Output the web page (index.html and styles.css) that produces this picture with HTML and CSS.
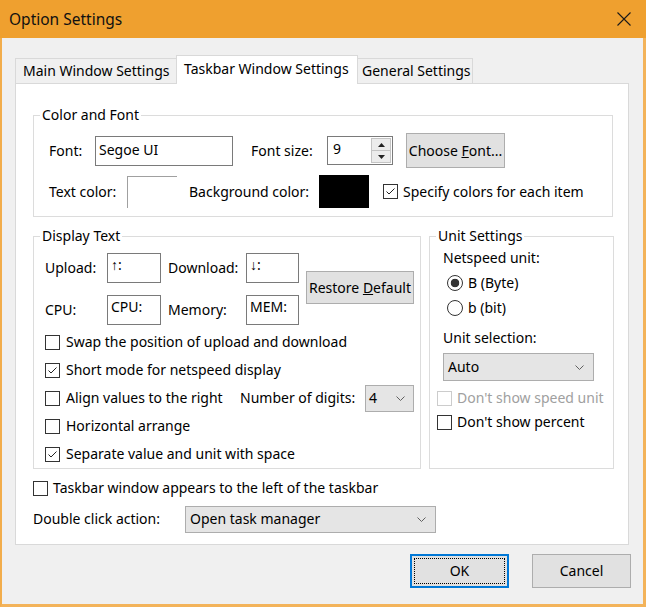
FILE: index.html
```html
<!DOCTYPE html>
<html>
<head>
<meta charset="utf-8">
<title>Option Settings</title>
<link rel="stylesheet" href="styles.css">
</head>
<body>
<div class="titlebar">
  <span class="title">Option Settings</span>
  <svg class="close" width="14" height="14" viewBox="0 0 14 14"><path d="M0.5 0.5 L13.5 13.5 M13.5 0.5 L0.5 13.5" stroke="#1a1a1a" stroke-width="1.1" fill="none"/></svg>
</div>
<div class="client">
  <div class="tabs">
    <div class="tab t-main">Main Window Settings</div>
    <div class="tab t-active">Taskbar Window Settings</div>
    <div class="tab t-gen">General Settings</div>
  </div>
  <div class="panel">
    <fieldset class="group g-color">
      <legend>Color and Font</legend>
      <div class="cf-body">
        <div class="cf-row r1">
          <span class="lbl w-font">Font:</span>
          <div class="edit font-edit">Segoe UI</div>
          <span class="lbl w-fs">Font size:</span>
          <div class="spin">
            <div class="spin-text">9</div>
            <div class="spin-btns">
              <div class="spin-btn"><svg width="7" height="4" viewBox="0 0 7 4"><path d="M0 4 L3.5 0 L7 4 Z" fill="#222"/></svg></div>
              <div class="spin-btn"><svg width="7" height="4" viewBox="0 0 7 4"><path d="M0 0 L3.5 4 L7 0 Z" fill="#222"/></svg></div>
            </div>
          </div>
          <div class="btn choose"><span>Choose <u>F</u>ont...</span></div>
        </div>
        <div class="cf-row r2">
          <span class="lbl w-tc">Text color:</span>
          <div class="swatch sw-white"></div>
          <span class="lbl w-bc">Background color:</span>
          <div class="swatch sw-black"></div>
          <label class="check c-spec"><span class="box"><svg width="13" height="13" viewBox="0 0 13 13"><polyline points="2.5,6.5 5,9 10.5,3.5" fill="none" stroke="#222" stroke-width="1"/></svg></span><span>Specify colors for each item</span></label>
        </div>
      </div>
    </fieldset>

    <div class="mid">
      <fieldset class="group g-display">
        <legend>Display Text</legend>
        <div class="dt-body">
          <div class="dt-grid">
            <span class="lbl">Upload:</span>
            <div class="edit small">↑:</div>
            <span class="lbl lbl2">Download:</span>
            <div class="edit small">↓:</div>
            <div class="btn restore"><span>Restore <u>D</u>efault</span></div>
            <span class="lbl">CPU:</span>
            <div class="edit small">CPU:</div>
            <span class="lbl lbl2">Memory:</span>
            <div class="edit small">MEM:</div>
          </div>
          <div class="checks">
            <label class="check row"><span class="box"></span><span>Swap the position of upload and download</span></label>
            <label class="check row"><span class="box"><svg width="13" height="13" viewBox="0 0 13 13"><polyline points="2.5,6.5 5,9 10.5,3.5" fill="none" stroke="#222" stroke-width="1"/></svg></span><span>Short mode for netspeed display</span></label>
            <div class="row digits-row">
              <label class="check c-align"><span class="box"></span><span>Align values to the right</span></label>
              <span class="lbl w-dig">Number of digits:</span>
              <div class="combo c-dig"><span>4</span><svg width="9" height="5" viewBox="0 0 9 5"><polyline points="0.5,0.5 4.5,4.5 8.5,0.5" fill="none" stroke="#606060" stroke-width="1"/></svg></div>
            </div>
            <label class="check row"><span class="box"></span><span>Horizontal arrange</span></label>
            <label class="check row"><span class="box"><svg width="13" height="13" viewBox="0 0 13 13"><polyline points="2.5,6.5 5,9 10.5,3.5" fill="none" stroke="#222" stroke-width="1"/></svg></span><span>Separate value and unit with space</span></label>
          </div>
        </div>
      </fieldset>

      <fieldset class="group g-unit">
        <legend>Unit Settings</legend>
        <div class="us-body">
          <div class="lbl-line">Netspeed unit:</div>
          <div class="radios">
            <label class="radio-row"><span class="radio on"></span><span>B (Byte)</span></label>
            <label class="radio-row"><span class="radio"></span><span>b (bit)</span></label>
          </div>
          <div class="lbl-line us-sel">Unit selection:</div>
          <div class="combo c-auto"><span>Auto</span><svg width="9" height="5" viewBox="0 0 9 5"><polyline points="0.5,0.5 4.5,4.5 8.5,0.5" fill="none" stroke="#606060" stroke-width="1"/></svg></div>
          <div class="us-checks">
            <label class="check urow disabled"><span class="box"></span><span>Don't show speed unit</span></label>
            <label class="check urow"><span class="box"></span><span>Don't show percent</span></label>
          </div>
        </div>
      </fieldset>
    </div>

    <label class="check c-left"><span class="box"></span><span>Taskbar window appears to the left of the taskbar</span></label>
    <div class="dbl-row">
      <span class="lbl w-dbl">Double click action:</span>
      <div class="combo c-dbl"><span>Open task manager</span><svg width="9" height="5" viewBox="0 0 9 5"><polyline points="0.5,0.5 4.5,4.5 8.5,0.5" fill="none" stroke="#606060" stroke-width="1"/></svg></div>
    </div>
  </div>
  <div class="buttons">
    <div class="btn dlg ok"><span class="focus">OK</span></div>
    <div class="btn dlg">Cancel</div>
  </div>
</div>
</body>
</html>
```

FILE: styles.css
```css
* { box-sizing: border-box; }
html, body { margin: 0; padding: 0; }
body {
  width: 646px;
  height: 607px;
  overflow: hidden;
  background: #f0f0f0;
  font-family: "Noto Sans", "Open Sans", sans-serif;
  font-size: 14px;
  line-height: 18px;
  color: #000;
}

/* title bar */
.titlebar {
  height: 38px;
  background: #efa02f;
  display: flex;
  align-items: center;
  justify-content: space-between;
  padding: 0 15px 0 9px;
}
.title { font-size: 15.5px; color: #111; }
.close { display: block; }

/* client area */
.client {
  height: 569px;
  border-left: 2px solid #f2ad4c;
  border-right: 3px solid #f3b35a;
  border-bottom: 3px solid #f3b35a;
  background: #f0f0f0;
  padding-top: 17px;
}

.tabs {
  display: flex;
  align-items: flex-end;
  height: 28px;
  margin-left: 13px;
}
.tab {
  height: 25px;
  background: #f0f0f0;
  border: 1px solid #d9d9d9;
  border-bottom: none;
  padding: 3px 0 0 7px;
  white-space: nowrap;
}
.t-main { width: 161px; border-right: none; }
.t-active {
  width: 182px;
  height: 29px;
  margin-bottom: -1px;
  background: #fff;
  position: relative;
  z-index: 1;
  padding-top: 4px;
}
.t-gen { width: 115px; border-left: none; padding-left: 4px; }

.panel {
  margin-left: 13px;
  width: 614px;
  height: 462px;
  background: #fff;
  border: 1px solid #d9d9d9;
  padding: 22px 0 0 17px;
}

/* group boxes */
.group {
  margin: 0;
  padding: 0;
  border: 1px solid #dcdcdc;
  min-width: 0;
}
.group legend {
  padding: 0 2px;
  margin-left: 6px;
  line-height: 18px;
}
.g-color { width: 580px; height: 111px; }
.cf-body { padding: 9px 0 0 15px; }
.cf-row { display: flex; align-items: center; }
.r1 { height: 35px; }
.r2 { height: 33px; margin-top: 7px; }
.lbl { white-space: nowrap; }
.w-font { width: 46px; }
.w-fs { width: 76px; margin-left: 18px; }
.w-tc { width: 78px; }
.w-bc { width: 130px; margin-left: 12px; }

.edit {
  background: #fff;
  border: 1px solid #7a7a7a;
  white-space: nowrap;
}
.font-edit {
  width: 138px;
  height: 30px;
  padding: 4px 0 0 3px;
}
.spin {
  width: 66px;
  height: 29px;
  border: 1px solid #7a7a7a;
  background: #fff;
  display: flex;
}
.spin-text { flex: 1; padding: 3px 0 0 5px; }
.spin-btns {
  width: 22px;
  display: flex;
  flex-direction: column;
  padding: 1px;
}
.spin-btn {
  flex: 1;
  background: #ececec;
  border: 1px solid #c4c4c4;
  display: flex;
  align-items: center;
  justify-content: center;
}
.spin-btn + .spin-btn { border-top: none; }

.btn {
  background: #e1e1e1;
  border: 1px solid #adadad;
  display: flex;
  align-items: center;
  justify-content: center;
  white-space: nowrap;
}
.choose { width: 99px; height: 35px; margin-left: 13px; }

.swatch { width: 50px; }
.sw-white { height: 32px; background: #fff; border-top: 1px solid #a0a0a0; border-left: 1px solid #a0a0a0; }
.sw-black { height: 33px; background: #000; }

/* checkboxes */
.check { display: flex; align-items: center; white-space: nowrap; }
.check .box {
  width: 15px;
  height: 15px;
  border: 1px solid #333;
  background: #fff;
  margin-right: 6px;
  flex: none;
  display: flex;
}
.check .box svg { display: block; }
.c-spec { margin-left: 14px; }
.c-spec .box { margin-right: 5px; }

/* middle row */
.mid { display: flex; gap: 8px; margin-top: 10px; }
.g-display { width: 388px; height: 242px; }
.g-unit { width: 185px; height: 242px; }

.dt-body { padding: 8px 0 0 11px; }
.dt-grid {
  display: grid;
  grid-template-columns: 62px 54px 85px 53px 115px;
  grid-template-rows: 30px 30px;
  row-gap: 12px;
  align-items: center;
}
.lbl2 { padding-left: 7px; }
.edit.small { height: 30px; padding: 2px 0 0 3px; }
.restore {
  grid-column: 5;
  grid-row: 1 / span 2;
  align-self: start;
  margin: 18px 0 0 7px;
  width: 108px;
  height: 33px;
}
.checks { margin-top: 3px; }
.row { height: 28px; }
.digits-row { display: flex; align-items: center; }
.c-align { width: 195px; }
.w-dig { width: 125px; }

.combo {
  background: #e5e5e5;
  border: 1px solid #adadad;
  display: flex;
  align-items: center;
  justify-content: space-between;
  white-space: nowrap;
}
.combo svg { display: block; }
.c-dig { width: 49px; height: 27px; padding: 0 8px 0 3px; }

/* unit settings */
.us-body { padding: 4px 0 0 13px; }
.lbl-line { height: 18px; }
.radios { margin-top: 3px; padding-left: 4px; }
.radio-row { display: flex; align-items: center; height: 25px; }
.radio {
  width: 16px;
  height: 16px;
  border: 1px solid #333;
  border-radius: 50%;
  background: #fff;
  margin-right: 5px;
  flex: none;
}
.radio.on { background: radial-gradient(circle, #333 0 4px, #fff 4.6px); }
.us-sel { margin-top: 9px; }
.c-auto { width: 151px; height: 28px; margin-top: 6px; padding: 0 9px 0 4px; }
.us-checks { margin-top: 5px; margin-left: -6px; }
.urow { height: 24px; }
.urow .box { margin-right: 5px; }
.disabled { color: #a0a0a0; }
.disabled .box { border-color: #cccccc; }

/* bottom of panel */
.c-left { height: 24px; margin-top: 7px; }
.c-left .box { margin-right: 5px; }
.dbl-row { display: flex; align-items: center; height: 28px; margin-top: 5px; }
.w-dbl { width: 152px; }
.c-dbl { width: 251px; height: 27px; padding: 0 9px 0 4px; }

/* dialog buttons */
.buttons {
  display: flex;
  justify-content: flex-end;
  gap: 23px;
  margin-top: 9px;
  padding-right: 12px;
}
.dlg { width: 99px; height: 34px; }
.ok {
  border: 2px solid #0078d7;
  padding: 2px;
}
.ok .focus {
  flex: 1;
  align-self: stretch;
  border: 1px dotted #000;
  display: flex;
  align-items: center;
  justify-content: center;
}
```
